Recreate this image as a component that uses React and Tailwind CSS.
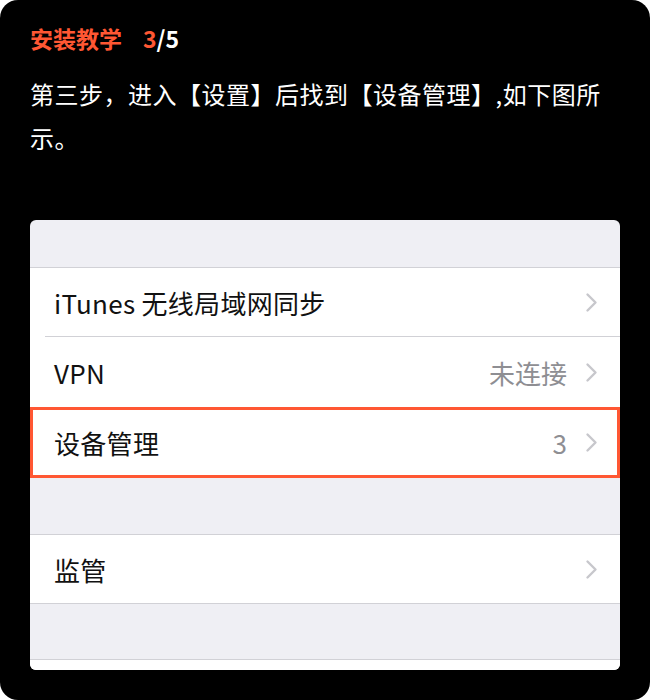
import React from 'react'

const Chevron = () => (
  <svg width="13" height="21" viewBox="0 0 13 21" fill="none" className="shrink-0">
    <path d="M2.5 2.5l8 8-8 8" stroke="#c7c7cc" strokeWidth="2.4" strokeLinecap="round" strokeLinejoin="round" />
  </svg>
)

const Row = ({ label, value, className = '' }) => (
  <div className={`flex items-center justify-between bg-white ${className}`}>
    <span className="text-[26px] text-[#111] tracking-[0.3px]">{label}</span>
    <div className="flex items-center gap-[18px]">
      {value && <span className="text-[26px] text-[#8e8e93]">{value}</span>}
      <Chevron />
    </div>
  </div>
)

export default function App() {
  return (
    <div className="bg-white">
      <div
        className="w-[650px] h-[700px] bg-black rounded-[18px] px-[30px] pt-[23px] pb-[30px] flex flex-col"
        style={{ fontFamily: '"Noto Sans CJK SC", "Noto Sans", sans-serif' }}
      >
        {/* Title */}
        <div className="flex items-baseline text-[23px] leading-[30px] font-bold">
          <span className="text-[#ff5733]">安装教学</span>
          <span className="ml-[21px] text-[#ff5733]">3</span>
          <span className="text-white">/5</span>
        </div>

        <p className="mt-[19px] text-[24px] leading-[44px] tracking-[0.5px] text-white">
          第三步，进入【设置】后找到【设备管理】,如下图所示。
        </p>

        {/* Settings screenshot */}
        <div className="mt-[60px] flex-1 bg-[#efeff4] rounded-[6px] overflow-hidden flex flex-col">
          <div className="h-[48px] border-b border-[#d1d1d6]" />
          <div className="bg-white">
            <Row label="iTunes 无线局域网同步" className="h-[68px] pl-[24px] pr-[22px]" />
            <div className="ml-[15px] h-px bg-[#d1d1d6]" />
            <Row label="VPN" value="未连接" className="h-[70px] pl-[24px] pr-[22px]" />
            <Row
              label="设备管理"
              value="3"
              className="h-[71px] pl-[21px] pr-[19px] border-[3px] border-[#ff5733]"
            />
          </div>
          <div className="h-[57px] border-b border-[#d1d1d6]" />
          <Row label="监管" className="h-[69px] pl-[24px] pr-[22px] border-b border-[#d1d1d6]" />
          <div className="h-[56px] border-b border-[#d1d1d6]" />
          <div className="flex-1 bg-white" />
        </div>
      </div>
    </div>
  )
}
